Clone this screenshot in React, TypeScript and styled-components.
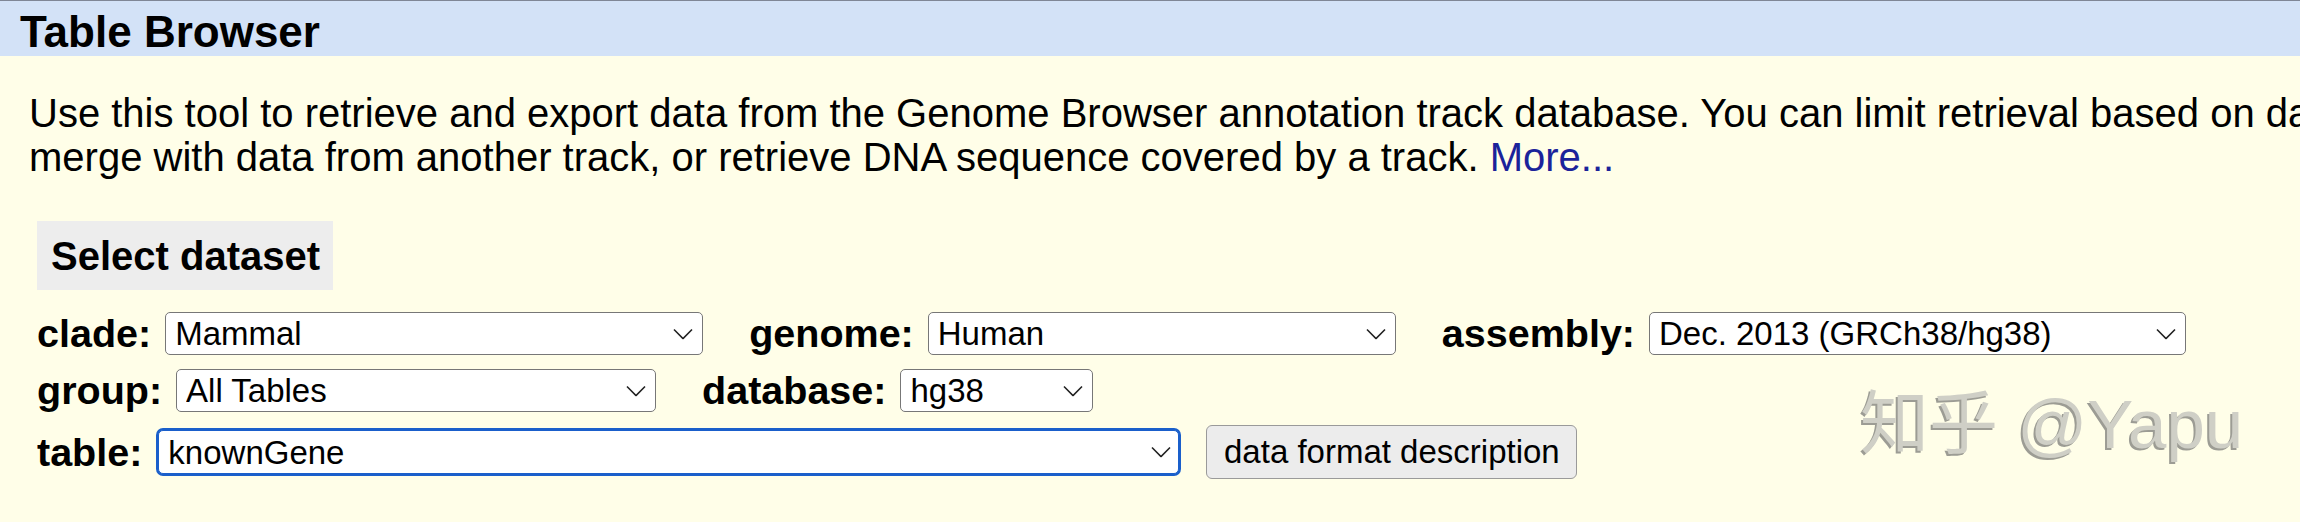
import React from "react";
import styled, { createGlobalStyle } from "styled-components";

const GlobalStyle = createGlobalStyle`
  html, body {
    margin: 0;
    padding: 0;
    background: #fffee8;
    overflow: hidden;
  }
  body {
    font-family: "Liberation Sans", Arial, sans-serif;
    color: #000;
  }
`;

type FieldProps = {
  label: string;
  value: string;
  width: number;
  first?: boolean;
  focused?: boolean;
};

const Chevron = () => (
  <svg width="20" height="11" viewBox="0 0 20 11" fill="none">
    <path d="M1 1L10 10L19 1" stroke="#222" strokeWidth="1.6" />
  </svg>
);

const Field: React.FC<FieldProps> = ({ label, value, width, first, focused }) => (
  <FieldGroup $first={first}>
    <Label>{label}</Label>
    <SelectWrap style={{ width }}>
      <Select $focused={focused} defaultValue={value}>
        <option>{value}</option>
      </Select>
      <Arrow>
        <Chevron />
      </Arrow>
    </SelectWrap>
  </FieldGroup>
);

const App: React.FC = () => {
  return (
    <Page>
      <GlobalStyle />
      <Header>
        <Title>Table Browser</Title>
      </Header>
      <Content>
        <Intro>
          Use this tool to retrieve and export data from the Genome Browser
          annotation track database. You can limit retrieval based on data
          attributes and intersect or
          <br />
          merge with data from another track, or retrieve DNA sequence covered
          by a track. <MoreLink href="#">More...</MoreLink>
        </Intro>
        <SectionTitle>Select dataset</SectionTitle>
        <Form>
          <Row>
            <Field first label="clade:" value="Mammal" width={538} />
            <Field label="genome:" value="Human" width={468} />
            <Field label="assembly:" value="Dec. 2013 (GRCh38/hg38)" width={537} />
          </Row>
          <Row>
            <Field first label="group:" value="All Tables" width={480} />
            <Field label="database:" value="hg38" width={193} />
          </Row>
          <Row>
            <Field first focused label="table:" value="knownGene" width={1025} />
            <Button type="button">data format description</Button>
          </Row>
        </Form>
      </Content>
      <Watermark>知乎 @Yapu</Watermark>
    </Page>
  );
};

const Page = styled.div`
  position: relative;
  width: 2300px;
  height: 522px;
  overflow: hidden;
  background: #fffee8;
`;

const Header = styled.div`
  border-top: 1px solid #7f8696;
  background: #d3e2f7;
  height: 48px;
  padding: 7px 20px 0;
`;

const Title = styled.div`
  font-size: 44px;
  font-weight: bold;
  line-height: 48px;
  white-space: nowrap;
`;

const Content = styled.div`
  padding: 35px 0 0 29px;
`;

const Intro = styled.p`
  margin: 0;
  font-size: 40px;
  line-height: 44px;
  white-space: nowrap;
`;

const MoreLink = styled.a`
  color: #1b239a;
  text-decoration: none;
`;

const SectionTitle = styled.div`
  display: inline-block;
  margin: 42px 0 0 8px;
  padding: 12px 13px 11px 14px;
  background: #ededed;
  font-size: 40px;
  font-weight: bold;
  line-height: 46px;
`;

const Form = styled.div`
  display: flex;
  flex-direction: column;
  gap: 12px;
  margin: 21px 0 0 8px;
`;

const Row = styled.div`
  display: flex;
  align-items: center;
  min-height: 43px;
`;

const FieldGroup = styled.div<{ $first?: boolean }>`
  display: flex;
  align-items: center;
  gap: 14px;
  margin-left: ${(p) => (p.$first ? "0" : "46px")};
`;

const Label = styled.span`
  font-size: 39.5px;
  font-weight: bold;
  white-space: nowrap;
`;

const SelectWrap = styled.div`
  position: relative;
  display: flex;
`;

const Select = styled.select<{ $focused?: boolean }>`
  appearance: none;
  -webkit-appearance: none;
  width: 100%;
  height: ${(p) => (p.$focused ? "44px" : "43px")};
  margin: ${(p) => (p.$focused ? "0 2px" : "0")};
  padding: 0 40px 0 9px;
  box-sizing: border-box;
  background: #fff;
  border: 1px solid ${(p) => (p.$focused ? "#1a5fcb" : "#777")};
  border-radius: 5px;
  box-shadow: ${(p) => (p.$focused ? "0 0 0 2px #1a5fcb" : "none")};
  font-family: "Liberation Sans", Arial, sans-serif;
  font-size: 33px;
  color: #000;
  outline: none;
`;

const Arrow = styled.span`
  position: absolute;
  right: 10px;
  top: 50%;
  transform: translateY(-50%);
  display: flex;
  pointer-events: none;
`;

const Button = styled.button`
  margin-left: 25px;
  height: 54px;
  width: 371px;
  padding: 0 15px;
  background: #ececec;
  border: 1px solid #9a9a9a;
  border-radius: 6px;
  font-family: "Liberation Sans", Arial, sans-serif;
  font-size: 33px;
  color: #000;
  white-space: nowrap;
`;

const Watermark = styled.div`
  position: absolute;
  left: 1860px;
  top: 390px;
  font-family: "Liberation Sans", "Noto Sans CJK SC", sans-serif;
  font-size: 69px;
  line-height: 1;
  color: #cfcfc6;
  text-shadow: -2px 2px 0 #9c9c94;
  white-space: nowrap;
  pointer-events: none;
`;

export default App;
